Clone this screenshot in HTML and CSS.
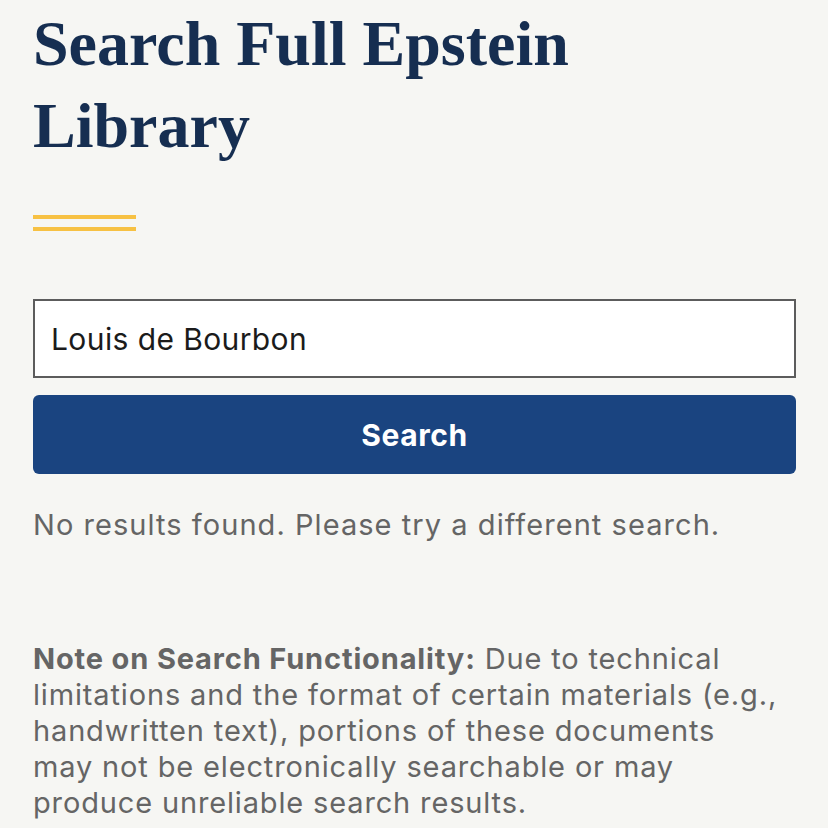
FILE: index.html
```html
<!DOCTYPE html>
<html lang="en">
<head>
<meta charset="utf-8">
<title>Search Full Epstein Library</title>
<link rel="stylesheet" href="styles.css">
</head>
<body>
<main class="page">
  <h1 class="title">Search Full Epstein Library</h1>
  <div class="rule"><span></span><span></span></div>
  <form class="search">
    <input class="field" type="text" value="Louis de Bourbon">
    <button class="btn" type="button">Search</button>
  </form>
  <p class="empty">No results found. Please try a different search.</p>
  <p class="note"><strong>Note on Search Functionality:</strong> Due to technical limitations and the format of certain materials (e.g., handwritten text), portions of these documents <span class="nw">may not</span> be electronically searchable or may produce unreliable search results.</p>
</main>
</body>
</html>
```
FILE: styles.css
```css
html, body {
  margin: 0;
  padding: 0;
  background: #f6f6f3;
}
.page {
  padding: 0 32px 0 33px;
  font-family: "Inter", "Liberation Sans", sans-serif;
}
.title {
  margin: 0;
  padding-top: 3px;
  font-family: "Liberation Serif", serif;
  font-weight: 700;
  font-size: 64px;
  line-height: 82px;
  color: #162e51;
  width: 620px;
}
.rule {
  margin-top: 48px;
  display: flex;
  flex-direction: column;
  gap: 8px;
  width: 103px;
}
.rule span {
  display: block;
  height: 4px;
  background: #f7c143;
}
.search {
  margin-top: 68px;
  display: flex;
  flex-direction: column;
  gap: 17px;
}
.field {
  box-sizing: border-box;
  height: 79px;
  width: 100%;
  margin: 0;
  border: 2px solid #5c5c5c;
  background: #fff;
  padding: 0 16px;
  font-family: "Inter", "Liberation Sans", sans-serif;
  font-size: 30px;
  letter-spacing: 0.4px;
  color: #1b1b1b;
  outline: none;
}
.btn {
  height: 79px;
  width: 100%;
  border: 0;
  border-radius: 6px;
  background: #1a4480;
  color: #fff;
  font-family: "Inter", "Liberation Sans", sans-serif;
  font-weight: 700;
  font-size: 30px;
  letter-spacing: 0.6px;
}
.empty {
  margin: 33px 0 0;
  font-size: 29px;
  letter-spacing: 1.05px;
  line-height: 36px;
  color: #656565;
}
.note {
  margin: 98px 0 0;
  font-size: 29px;
  letter-spacing: 0.85px;
  line-height: 36px;
  color: #656565;
}
.note strong {
  font-weight: 700;
}
.nw {
  white-space: nowrap;
}
```
